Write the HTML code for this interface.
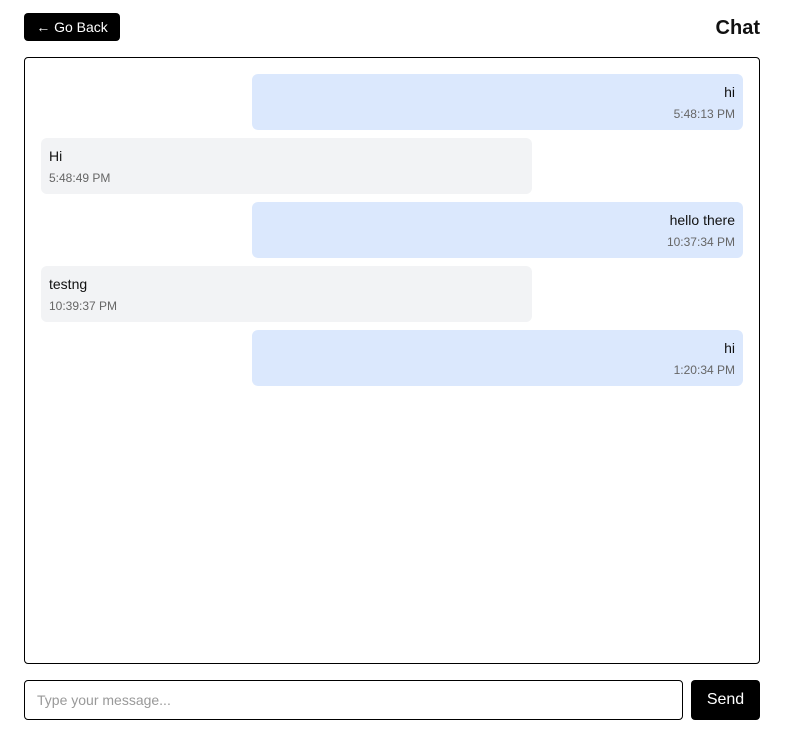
<!DOCTYPE html>
<html><head><style>
*{box-sizing:border-box;margin:0;padding:0}
body{width:785px;height:739px;background:#fff;font-family:"Liberation Sans",Arial,sans-serif;color:#111;position:relative;overflow:hidden}
.back{position:absolute;left:24px;top:13px;width:96px;height:28px;background:#000;color:#fff;border-radius:4px;font-size:14px;line-height:28px;text-align:center}
.title{position:absolute;right:25px;top:16px;font-size:20px;font-weight:bold;line-height:24px}
.box{position:absolute;left:24px;top:57px;width:736px;height:607px;border:1px solid #000;border-radius:4px}
.m{position:absolute;height:56px;border-radius:6px;padding:9px 8px 0}
.s{left:227px;width:491px;background:#dbe8fd;text-align:right}
.r{left:16px;width:491px;background:#f2f3f5}
.t{font-size:14px;line-height:18px}
.d{font-size:12px;color:#666;line-height:14px;margin-top:6px}
.in{position:absolute;left:24px;top:680px;width:659px;height:40px;border:1px solid #000;border-radius:4px;font-size:14px;color:#999;padding-left:12px;line-height:38px}
.send{position:absolute;left:691px;top:680px;width:69px;height:40px;background:#000;color:#fff;border-radius:4px;font-size:16px;line-height:40px;text-align:center}
</style></head><body>
<div class="back">← Go Back</div>
<div class="title">Chat</div>
<div class="box">
<div class="m s" style="top:16px"><div class="t">hi</div><div class="d">5:48:13 PM</div></div>
<div class="m r" style="top:80px"><div class="t">Hi</div><div class="d">5:48:49 PM</div></div>
<div class="m s" style="top:144px"><div class="t">hello there</div><div class="d">10:37:34 PM</div></div>
<div class="m r" style="top:208px"><div class="t">testng</div><div class="d">10:39:37 PM</div></div>
<div class="m s" style="top:272px"><div class="t">hi</div><div class="d">1:20:34 PM</div></div>
</div>
<div class="in">Type your message...</div>
<div class="send">Send</div>
</body></html>
